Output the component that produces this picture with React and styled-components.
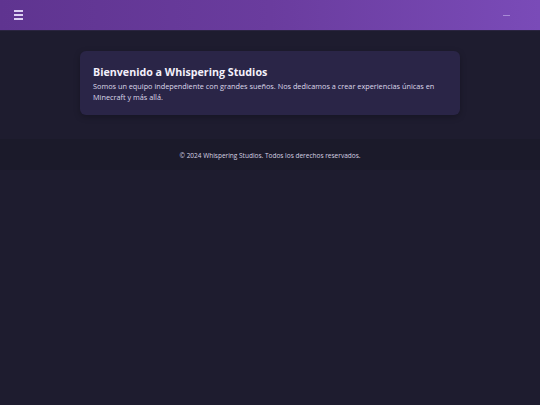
import React from "react";
import styled, { createGlobalStyle } from "styled-components";

const Global = createGlobalStyle`
  html, body { margin: 0; padding: 0; background: #1e1c2f; }
  body { font-family: "Open Sans", "Noto Sans", sans-serif; color: #ece8f6; }
  * { box-sizing: border-box; }
`;

const Page = styled.div`
  min-height: 405px;
  display: flex;
  flex-direction: column;
  background: #1e1c2f;
`;

const Header = styled.header`
  height: 31px;
  display: flex;
  align-items: center;
  justify-content: space-between;
  padding: 0 30px 0 14px;
  background: linear-gradient(90deg, #5f3490 0%, #6a3c9e 50%, #7a4bb8 100%);
  border-bottom: 1px solid #2a2440;
`;

const Burger = styled.button`
  display: flex;
  flex-direction: column;
  gap: 2.2px;
  width: 9px;
  padding: 0;
  border: 0;
  background: none;
  span {
    display: block;
    height: 1.8px;
    background: #ddd0f2;
  }
`;

const NavDash = styled.span`
  width: 7px;
  height: 1px;
  background: #a88ad6;
  margin-top: 1px;
`;

const Main = styled.main`
  padding: 20px 80px 24px;
`;

const Card = styled.section`
  background: #2a2547;
  border-radius: 6px;
  padding: 14px 13px 12px;
  box-shadow: 0 2px 6px rgba(0, 0, 0, 0.25);
`;

const Title = styled.h1`
  margin: 0 0 2px;
  font-size: 10.7px;
  font-weight: 700;
  line-height: 14px;
  color: #f4f0fb;
`;

const Text = styled.p`
  margin: 0;
  font-size: 7.3px;
  line-height: 11px;
  color: #ddd8ea;
`;

const Footer = styled.footer`
  background: #1b1a2a;
  padding: 11px 0 9px;
  text-align: center;
  font-size: 6.5px;
  line-height: 11px;
  color: #d6d2e2;
`;

export default function App() {
  return (
    <Page>
      <Global />
      <Header>
        <Burger aria-label="menu">
          <span />
          <span />
          <span />
        </Burger>
        <NavDash />
      </Header>
      <Main>
        <Card>
          <Title>Bienvenido a Whispering Studios</Title>
          <Text>
            Somos un equipo independiente con grandes sueños. Nos dedicamos a
            crear experiencias únicas en Minecraft y más allá.
          </Text>
        </Card>
      </Main>
      <Footer>© 2024 Whispering Studios. Todos los derechos reservados.</Footer>
    </Page>
  );
}
